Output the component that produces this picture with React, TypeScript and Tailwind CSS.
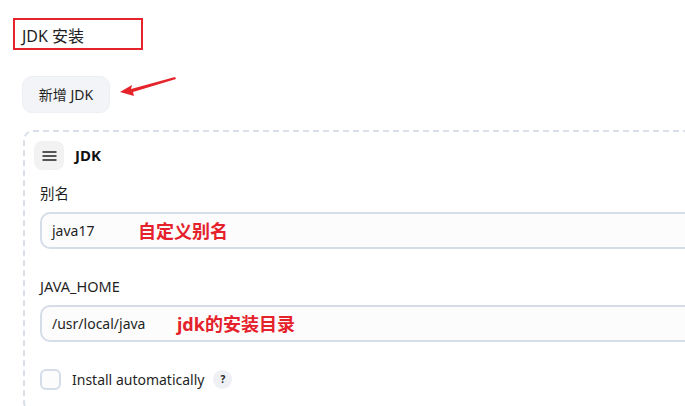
import React from "react";

const font = { fontFamily: '"Noto Sans", "Noto Sans CJK SC", sans-serif' };

function Field({ label, value, note, noteLeft }: { label: string; value: string; note: string; noteLeft: string }) {
  return (
    <div>
      <div className="h-[20px] text-[14.5px] leading-[20px] text-[#1f1f1f]">{label}</div>
      <div className="relative mt-[9px] flex h-[37px] items-center rounded-[10px] border-2 border-[#d5dde8] bg-[#fcfcfc] pl-[10px] text-[14px] text-[#1f1f1f]">
        {value}
        <span className={`absolute top-1/2 -translate-y-1/2 text-[18px] font-bold text-[#e5212b] ${noteLeft}`}>{note}</span>
      </div>
    </div>
  );
}

export default function App() {
  return (
    <div className="relative h-[406px] w-[685px] overflow-hidden bg-white text-[#1f1f1f]" style={font}>
      <div className="ml-[13px] mt-[18px] flex h-[32px] w-[130px] items-center border-2 border-[#e5232b] pl-[7px] pt-[3px] text-[16px]">
        JDK 安装
      </div>

      <button className="ml-[22px] mt-[26px] flex h-[37px] w-[88px] items-center justify-center rounded-[10px] border border-[#eceff3] bg-[#f2f4f7] text-[14px] text-[#1f1f1f]">
        新增 JDK
      </button>

      <svg className="absolute left-[115px] top-[70px]" width="70" height="30" viewBox="0 0 70 30">
        <path d="M60 7 L16 19 L17 15 L5 22 L19 26 L18 22 L61 9 Z" fill="#e5232b" />
      </svg>

      <div className="ml-[23px] mt-[17px] w-[720px] rounded-[10px] border-2 border-dashed border-[#d9dfe8] pb-[20px]">
        <div className="flex items-center pl-[9px] pt-[9px]">
          <div className="flex h-[29px] w-[30px] items-center justify-center rounded-[8px] bg-[#f2f2f2]">
            <svg width="15" height="10" viewBox="0 0 15 10">
              <path d="M0.5 1h14M0.5 5h14M0.5 9h14" stroke="#222" strokeWidth="1.7" />
            </svg>
          </div>
          <span className="ml-[11px] text-[15px] font-bold text-[#111]">JDK</span>
        </div>

        <div className="pl-[15px]">
          <div className="mt-[13px]">
            <Field label="别名" value="java17" note="自定义别名" noteLeft="left-[96px]" />
          </div>
          <div className="mt-[27px]">
            <Field label="JAVA_HOME" value="/usr/local/java" note="jdk的安装目录" noteLeft="left-[135px]" />
          </div>
          <div className="mt-[27px] flex items-center">
            <div className="h-[21px] w-[21px] rounded-[6px] border-2 border-[#d5dde8] bg-[#fcfcfc]" />
            <span className="ml-[11px] text-[14px] text-[#1f1f1f]">Install automatically</span>
            <span className="ml-[9px] flex h-[19px] w-[19px] items-center justify-center rounded-full bg-[#eef0f4] text-[10px] font-bold text-[#222]">?</span>
          </div>
        </div>
      </div>
    </div>
  );
}
